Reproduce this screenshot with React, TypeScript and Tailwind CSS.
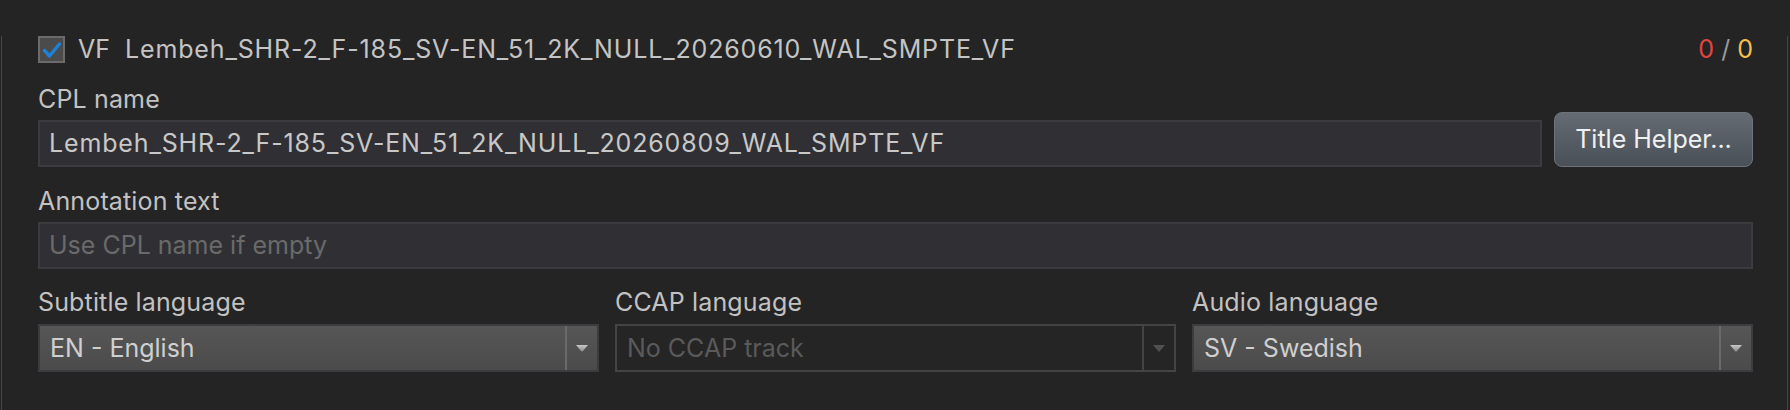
import React from "react";

function Dropdown({ value, disabled }: { value: string; disabled?: boolean }) {
  if (disabled) {
    return (
      <div className="flex h-[48px] border-2 border-[#444447] bg-[#252525]">
        <div className="flex flex-1 items-center pl-[10px] pt-[2px] text-[25px] text-[#5a5a5a]">{value}</div>
        <div className="flex w-[32px] items-center justify-center border-l-2 border-[#444447]">
          <svg width="12" height="7" viewBox="0 0 12 7">
            <path d="M0 0 L12 0 L7 6 Q6 7 5 6 Z" fill="#505050" />
          </svg>
        </div>
      </div>
    );
  }
  return (
    <div className="flex h-[48px] border-2 border-[#3b3b40] bg-gradient-to-b from-[#565656] to-[#4b4b4b]">
      <div className="flex flex-1 items-center pl-[10px] pt-[2px] text-[25px] text-[#cfcfcf]">{value}</div>
      <div className="flex w-[32px] items-center justify-center border-l-2 border-[#6a6a6a]">
        <svg width="12" height="7" viewBox="0 0 12 7">
          <defs>
            <linearGradient id="ag" x1="0" y1="0" x2="0" y2="1">
              <stop offset="0" stopColor="#c8c8c8" />
              <stop offset="1" stopColor="#8a8a8a" />
            </linearGradient>
          </defs>
          <path d="M0 0 L12 0 L7 6 Q6 7 5 6 Z" fill="url(#ag)" />
        </svg>
      </div>
    </div>
  );
}

function Label({ children }: { children: React.ReactNode }) {
  return <div className="h-[28px] pt-[1px] text-[25px] leading-[28px] tracking-[0.15px] text-[#c2c2c2]">{children}</div>;
}

export default function App() {
  return (
    <div className="h-[410px] w-[1790px] overflow-hidden bg-[#242424] font-['Inter',sans-serif]">
      <div className="ml-[1px] h-[409px] w-[1787px] rounded-b-[8px] border-x border-b border-[#474747] pl-[36px] pr-[34px]">
        {/* header */}
        <div className="mt-[36px] flex h-[27px] items-center">
          <div className="flex h-[27px] w-[27px] items-center justify-center border-2 border-[#6b6b6b] bg-[#4b4b4b]">
            <svg width="20" height="18" viewBox="0 0 20 18">
              <path d="M2.5 9.5 L7.5 15 L17.5 3" fill="none" stroke="#1f80d8" strokeWidth="3.4" strokeLinecap="round" strokeLinejoin="round" />
            </svg>
          </div>
          <span className="ml-[13px] text-[25px] text-[#c4c4c4]">VF</span>
          <span className="ml-[15px] text-[25px] tracking-[0.85px] text-[#c4c4c4]">Lembeh_SHR-2_F-185_SV-EN_51_2K_NULL_20260610_WAL_SMPTE_VF</span>
          <span className="ml-auto text-[25px]">
            <span className="text-[#e2443e]">0</span>
            <span className="text-[#9a9a9a]"> / </span>
            <span className="text-[#f2c04f]">0</span>
          </span>
        </div>

        {/* CPL name */}
        <div className="mt-[21px]">
          <Label>CPL name</Label>
        </div>
        <div className="flex h-[55px] items-end gap-[12px]">
          <div className="flex h-[47px] flex-1 items-center border-2 border-[#3b3b40] bg-[#303034] pl-[9px] pt-[1px] text-[25px] tracking-[0.85px] text-[#c8c8c8]">
            Lembeh_SHR-2_F-185_SV-EN_51_2K_NULL_20260809_WAL_SMPTE_VF
          </div>
          <button className="flex h-[55px] w-[199px] items-center justify-center rounded-[8px] border border-[#6e747c] bg-gradient-to-b from-[#656b73] to-[#4a5058] text-[25px] text-[#f0f0f0]">
            Title Helper...
          </button>
        </div>

        {/* Annotation */}
        <div className="mt-[19px]">
          <Label>Annotation text</Label>
        </div>
        <div className="mt-[8px] flex h-[47px] items-center border-2 border-[#3b3b40] bg-[#303034] pl-[9px] pt-[1px] text-[25px] text-[#6a6a6a]">
          Use CPL name if empty
        </div>

        {/* Languages */}
        <div className="mt-[18px] grid grid-cols-3 gap-[16px]">
          <div>
            <Label>Subtitle language</Label>
            <div className="mt-[9px]">
              <Dropdown value="EN - English" />
            </div>
          </div>
          <div>
            <Label>CCAP language</Label>
            <div className="mt-[9px]">
              <Dropdown value="No CCAP track" disabled />
            </div>
          </div>
          <div>
            <Label>Audio language</Label>
            <div className="mt-[9px]">
              <Dropdown value="SV - Swedish" />
            </div>
          </div>
        </div>
      </div>
    </div>
  );
}
